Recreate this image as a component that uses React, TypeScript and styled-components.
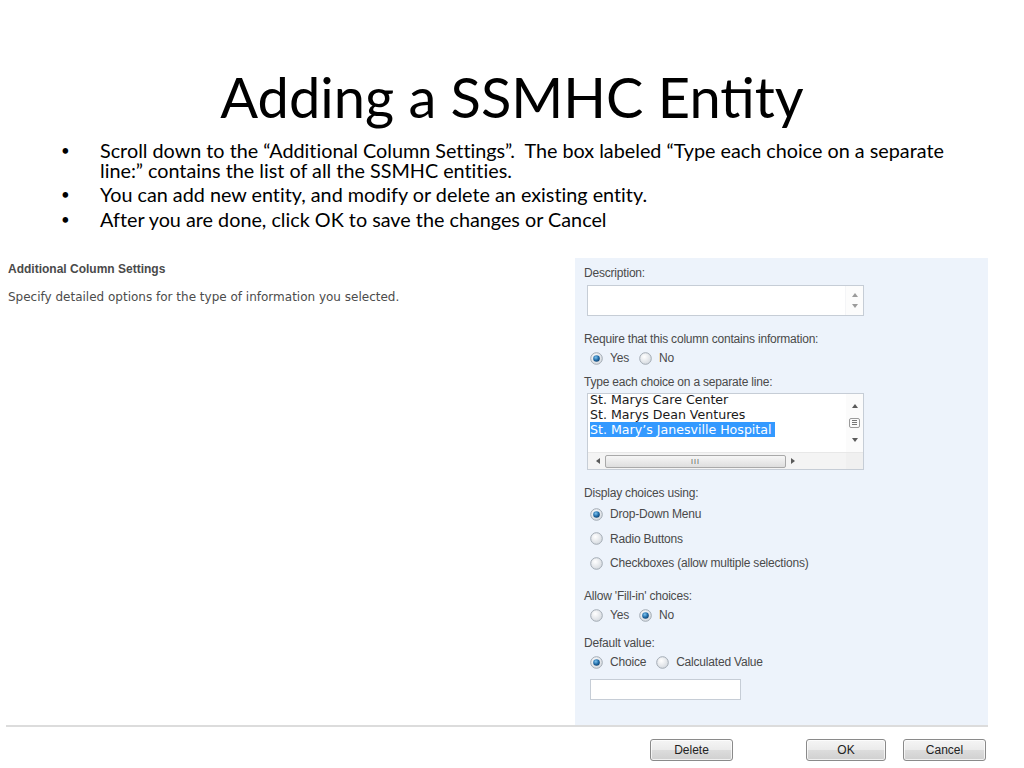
import React from 'react';
import styled, {createGlobalStyle} from 'styled-components';

const GlobalStyle = createGlobalStyle`
  html, body {
    margin: 0;
    padding: 0;
    background: #ffffff;
  }
  body {
    width: 1024px;
    height: 768px;
    overflow: hidden;
  }
`

type RadioItem = {
    text: string
    checked?: boolean
}

const Radio = ({checked}: { checked?: boolean }) => (
    <RadioIcon width="13" height="13" viewBox="0 0 13 13">
        <defs>
            <radialGradient id="rg" cx="0.4" cy="0.35" r="0.7">
                <stop offset="0" stopColor="#ffffff"/>
                <stop offset="1" stopColor="#d3d8de"/>
            </radialGradient>
            <radialGradient id="dot" cx="0.4" cy="0.35" r="0.7">
                <stop offset="0" stopColor="#7fc4ef"/>
                <stop offset="0.6" stopColor="#1f6aa6"/>
                <stop offset="1" stopColor="#12406a"/>
            </radialGradient>
        </defs>
        <circle cx="6.5" cy="6.5" r="5.8" fill="url(#rg)" stroke="#a3abb4" strokeWidth="1"/>
        {checked && <circle cx="6.5" cy="6.5" r="3.3" fill="url(#dot)"/>}
    </RadioIcon>
)

const RadioGroup = ({items, stacked}: { items: RadioItem[], stacked?: boolean }) => (
    <RadioList $stacked={stacked}>
        {items.map(item => (
            <RadioOption key={item.text}>
                <Radio checked={item.checked}/>
                <span>{item.text}</span>
            </RadioOption>
        ))}
    </RadioList>
)

const Arrow = ({dir}: { dir: 'up' | 'down' | 'left' | 'right' }) => {
    const pts = {
        up: '1,5 4,1 7,5',
        down: '1,1 4,5 7,1',
        left: '5,1 1,4 5,7',
        right: '1,1 5,4 1,7',
    }[dir]
    const w = dir === 'up' || dir === 'down' ? 8 : 6
    const h = dir === 'up' || dir === 'down' ? 6 : 8
    return (
        <svg width={w} height={h} viewBox={`0 0 ${w} ${h}`}>
            <polygon points={pts} fill="#5a5a5a"/>
        </svg>
    )
}

const choices = ['St. Marys Care Center', 'St. Marys Dean Ventures', 'St. Mary’s Janesville Hospital']

export default function App() {
    return (
        <Page>
            <GlobalStyle/>
            <Title>Adding a SSMHC Entity</Title>
            <Bullets>
                <li>
                    <BulletLine>Scroll down to the “Additional Column Settings”.&nbsp; The box labeled “Type each choice on a separate</BulletLine>
                    <BulletLine>line:” contains the list of all the SSMHC entities.</BulletLine>
                </li>
                <li><BulletLine>You can add new entity, and modify or delete an existing entity.</BulletLine></li>
                <li><BulletLine>After you are done, click OK to save the changes or Cancel</BulletLine></li>
            </Bullets>

            <Shot>
                <Columns>
                    <InfoColumn>
                        <InfoHeading>Additional Column Settings</InfoHeading>
                        <InfoText>Specify detailed options for the type of information you selected.</InfoText>
                    </InfoColumn>

                    <Panel>
                        <Section>
                            <Label>Description:</Label>
                            <TextArea>
                                <SpinBar>
                                    <Arrow dir="up"/>
                                    <Arrow dir="down"/>
                                </SpinBar>
                            </TextArea>
                        </Section>

                        <Section $top={16}>
                            <Label>Require that this column contains information:</Label>
                            <RadioGroup items={[{text: 'Yes', checked: true}, {text: 'No'}]}/>
                        </Section>

                        <Section $top={9}>
                            <Label>Type each choice on a separate line:</Label>
                            <ListBox>
                                <ListBody>
                                    <ListLines>
                                        {choices.map((c, i) => (
                                            <ListLine key={c} $selected={i === choices.length - 1}>{c}</ListLine>
                                        ))}
                                    </ListLines>
                                    <VScroll>
                                        <Arrow dir="up"/>
                                        <Grip>
                                            <i/><i/><i/>
                                        </Grip>
                                        <Arrow dir="down"/>
                                    </VScroll>
                                </ListBody>
                                <HScroll>
                                    <Arrow dir="left"/>
                                    <Thumb>
                                        <ThumbMarks>III</ThumbMarks>
                                    </Thumb>
                                    <Arrow dir="right"/>
                                    <Corner/>
                                </HScroll>
                            </ListBox>
                        </Section>

                        <Section $top={16}>
                            <Label>Display choices using:</Label>
                            <RadioGroup stacked items={[
                                {text: 'Drop-Down Menu', checked: true},
                                {text: 'Radio Buttons'},
                                {text: 'Checkboxes (allow multiple selections)'},
                            ]}/>
                        </Section>

                        <Section $top={18}>
                            <Label>Allow 'Fill-in' choices:</Label>
                            <RadioGroup items={[{text: 'Yes'}, {text: 'No', checked: true}]}/>
                        </Section>

                        <Section $top={13}>
                            <Label>Default value:</Label>
                            <RadioGroup items={[{text: 'Choice', checked: true}, {text: 'Calculated Value'}]}/>
                            <TextInput/>
                        </Section>
                    </Panel>
                </Columns>

                <Footer>
                    <Button $gap={73}>Delete</Button>
                    <Button $width={80} $gap={17}>OK</Button>
                    <Button>Cancel</Button>
                </Footer>
            </Shot>
        </Page>
    )
}

const Page = styled.div`
  width: 1024px;
  height: 768px;
  display: flex;
  flex-direction: column;
  font-family: "Lato", "Open Sans", sans-serif;
  color: #000;
`

const Title = styled.h1`
  margin: 0;
  padding-top: 61px;
  height: 76px;
  text-align: center;
  font-family: "Lato", "Open Sans", sans-serif;
  font-weight: 400;
  font-size: 56px;
  line-height: 72px;
`

const Bullets = styled.ul`
  margin: 3px 0 0 0;
  padding: 0 0 0 100px;
  list-style: none;
  font-size: 19.8px;
  line-height: 20px;
  font-variant-ligatures: none;

  li {
    position: relative;
    margin-bottom: 5px;
  }

  li::before {
    content: "•";
    position: absolute;
    left: -39px;
    top: 0;
    font-size: 15px;
  }
`

const BulletLine = styled.div`
  height: 19.5px;
  white-space: nowrap;
`

const Shot = styled.div`
  margin-top: 25px;
  width: 988px;
  display: flex;
  flex-direction: column;
`

const Columns = styled.div`
  display: grid;
  grid-template-columns: 575px 413px;
  height: 467px;
`

const InfoColumn = styled.div`
  padding: 4px 0 0 8px;
  background: #fff;
`

const InfoHeading = styled.div`
  font-family: "Liberation Sans", Arial, sans-serif;
  font-weight: 700;
  font-size: 12px;
  line-height: 14px;
  color: #4a4a4a;
`

const InfoText = styled.div`
  margin-top: 14px;
  font-family: "DejaVu Sans", Verdana, sans-serif;
  font-size: 12px;
  line-height: 14px;
  color: #4c4c4c;
`

const Panel = styled.div`
  background: #edf3fb;
  padding: 8px 0 0 9px;
  display: flex;
  flex-direction: column;
`

const Section = styled.div<{ $top?: number }>`
  margin-top: ${p => p.$top ?? 0}px;
  display: flex;
  flex-direction: column;
`

const Label = styled.div`
  font-family: "Liberation Sans", Arial, sans-serif;
  font-size: 12px;
  line-height: 14px;
  color: #4a4a4a;
  letter-spacing: -0.2px;
`

const TextArea = styled.div`
  margin: 5px 0 0 3px;
  width: 275px;
  height: 29px;
  background: #fff;
  border: 1px solid #c6cdd6;
  display: flex;
  justify-content: flex-end;
`

const SpinBar = styled.div`
  width: 17px;
  border-left: 1px solid #eef0f2;
  background: #fbfbfb;
  display: flex;
  flex-direction: column;
  align-items: center;
  justify-content: space-around;
  padding: 3px 0;
  opacity: 0.6;
`

const RadioList = styled.div<{ $stacked?: boolean }>`
  margin-top: ${p => p.$stacked ? 6 : 4}px;
  padding-left: 6px;
  display: flex;
  flex-direction: ${p => p.$stacked ? 'column' : 'row'};
  gap: ${p => p.$stacked ? '8.5px' : '10px'};
`

const RadioOption = styled.label`
  display: flex;
  align-items: center;
  gap: 7px;
  height: 16px;
  font-family: "Liberation Sans", Arial, sans-serif;
  font-size: 12px;
  color: #4a4a4a;
  letter-spacing: -0.2px;
`

const RadioIcon = styled.svg`
  flex: none;
`

const ListBox = styled.div`
  margin: 4px 0 0 3px;
  width: 275px;
  height: 75px;
  background: #fff;
  border: 1px solid #c6cdd6;
  display: flex;
  flex-direction: column;
`

const ListBody = styled.div`
  flex: 1;
  display: flex;
  min-height: 0;
`

const ListLines = styled.div`
  flex: 1;
  padding: 0 0 0 2px;
  margin-top: -2px;
  overflow: hidden;
`

const ListLine = styled.div<{ $selected?: boolean }>`
  display: table;
  font-family: "DejaVu Sans", Verdana, sans-serif;
  font-size: 12.6px;
  line-height: 15px;
  padding-right: 3px;
  color: ${p => p.$selected ? '#fff' : '#1a1a1a'};
  background: ${p => p.$selected ? '#3399ff' : 'transparent'};
`

const VScroll = styled.div`
  width: 17px;
  background: #fbfbfb;
  display: flex;
  flex-direction: column;
  align-items: center;
  justify-content: space-around;
  padding: 4px 0;
`

const Grip = styled.div`
  width: 11px;
  height: 10px;
  border: 1px solid #9a9a9a;
  border-radius: 2px;
  display: flex;
  flex-direction: column;
  justify-content: center;
  gap: 1px;
  padding: 0 2px;
  box-sizing: border-box;

  i {
    display: block;
    height: 1px;
    background: #777;
  }
`

const HScroll = styled.div`
  height: 16px;
  background: #f4f4f4;
  border-top: 1px solid #e8e8e8;
  display: flex;
  align-items: center;
  padding-left: 7px;
  gap: 4px;
`

const Thumb = styled.div`
  width: 181px;
  height: 13px;
  border: 1px solid #a9a9a9;
  border-radius: 2px;
  background: linear-gradient(#f6f6f6, #dedede);
  display: flex;
  justify-content: center;
  align-items: center;
  box-sizing: border-box;
`

const ThumbMarks = styled.span`
  font-family: "Liberation Sans", Arial, sans-serif;
  font-size: 7px;
  letter-spacing: 1px;
  color: #555;
`

const Corner = styled.div`
  margin-left: auto;
  width: 17px;
  height: 16px;
  background: #f0f0f0;
`

const TextInput = styled.div`
  margin: 9px 0 0 6px;
  width: 149px;
  height: 19px;
  background: #fff;
  border: 1px solid #c6cdd6;
`

const Footer = styled.div`
  margin-left: 6px;
  border-top: 2px solid #dcdcdc;
  display: flex;
  justify-content: flex-end;
  padding: 12px 2px 0 0;
`

const Button = styled.button<{ $width?: number, $gap?: number }>`
  width: ${p => p.$width ?? 83}px;
  height: 22px;
  margin-right: ${p => p.$gap ?? 0}px;
  padding: 0;
  border: 1px solid #8a8a8a;
  border-radius: 3px;
  background: linear-gradient(#f5f5f5 0%, #ebebeb 48%, #dcdcdc 52%, #d0d0d0 100%);
  font-family: "Liberation Sans", Arial, sans-serif;
  font-size: 12px;
  color: #222;
  box-shadow: inset 0 0 0 1px rgba(255, 255, 255, 0.7);
`
